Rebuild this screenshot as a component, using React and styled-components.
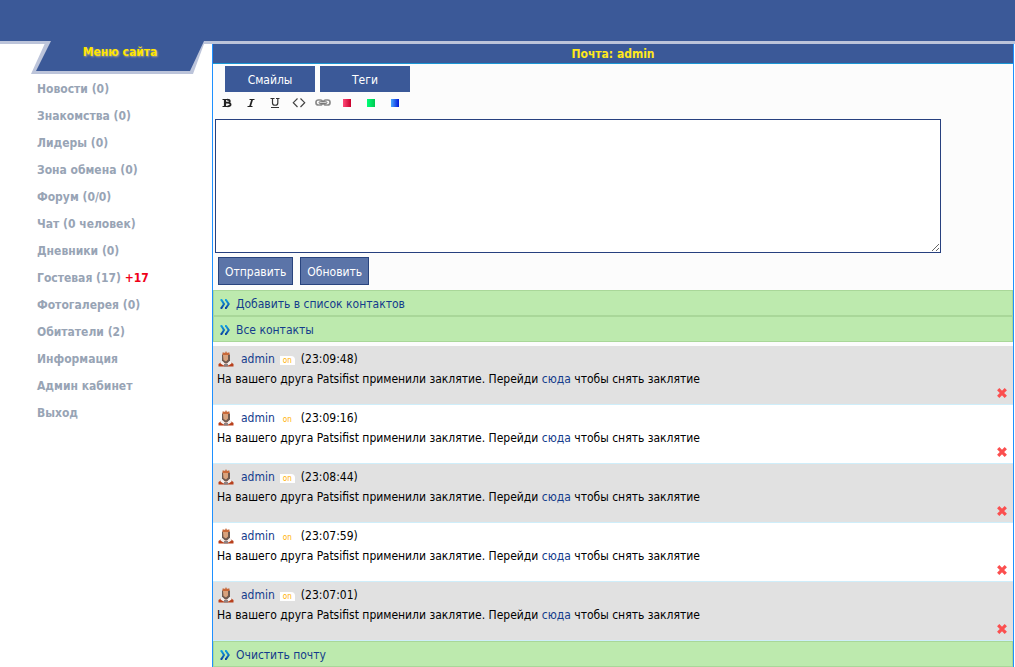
import React from 'react';
import styled, { createGlobalStyle } from 'styled-components';

const GlobalStyle = createGlobalStyle`
    body {
        margin: 0;
        background: #fff;
        color: #000;
        font-family: 'DejaVu Sans Condensed', 'DejaVu Sans', sans-serif;
        font-size: 12px;
    }
`;

const TopBar = styled.header`
    height: 41px;
    background: #3b5998;
    border-bottom: 3px solid #bcc4da;
`;

const Layout = styled.div`
    display: flex;
    align-items: flex-start;
`;

const Sidebar = styled.aside`
    flex: 0 0 212px;
`;

const MenuTitle = styled.h2`
    position: relative;
    width: 178px;
    height: 33px;
    margin: -3px 0 0 31px;
    font-size: 12px;
    line-height: 22px;
    text-align: center;
    color: #ffe600;
    text-shadow: 1px 1px 2px #b0a890;

    svg {
        position: absolute;
        top: 0;
        left: 0;
    }

    span {
        position: relative;
    }
`;

const MenuList = styled.ul`
    margin: 2px 0 0;
    padding: 0 0 0 37px;
    list-style: none;
`;

const MenuItem = styled.li`
    font-weight: bold;
    line-height: 27px;

    a {
        color: #98a4b5;
        text-decoration: none;
    }

    span {
        color: #f00018;
    }
`;

const Main = styled.main`
    flex: 1;
    min-width: 0;
    margin-right: 1px;
    border: solid #1e90ff;
    border-width: 0 1px;
    background: #fcfcfc;
`;

const Title = styled.h1`
    margin: 0;
    padding-top: 1px;
    border-bottom: 1px solid #1a96d4;
    background: #3b5998;
    color: #ffe81c;
    font-size: 12px;
    line-height: 18px;
    text-align: center;
`;

const Tabs = styled.div`
    display: flex;
    gap: 5px;
    padding: 2px 12px 0;
`;

const Tab = styled.button`
    width: 90px;
    height: 26px;
    padding: 2px 0 0;
    border: 0;
    background: #3b5998;
    color: #fff;
    font: inherit;
`;

const Toolbar = styled.div`
    display: flex;
    gap: 8px;
    padding: 3px 6px 8px;
`;

const Tool = styled.button`
    width: 16px;
    height: 16px;
    padding: 0;
    border: 0;
    background: none;

    svg {
        display: block;
    }
`;

const MessageBox = styled.textarea`
    display: block;
    width: 90%;
    height: 128px;
    margin: 0 2px;
    padding: 2px;
    border: 1px solid #27407f;
    background: #fff;
    font: inherit;
`;

const Actions = styled.div`
    display: flex;
    gap: 7px;
    padding: 4px 5px 5px;
`;

const ActionButton = styled.button`
    height: 28px;
    padding: 2px 6px 0;
    border: 1px solid #29447e;
    background: #5b74a8;
    color: #fff;
    font: inherit;
`;

const LinkRow = styled.a`
    display: flex;
    align-items: center;
    gap: 6px;
    height: 22px;
    padding: 2px 6px 0;
    border: 1px solid #a9d799;
    background: #bdeaae;
    color: #143c8c;
    text-decoration: none;
`;

const Messages = styled.div`
    padding-top: 4px;
`;

const MessageRow = styled.article`
    display: grid;
    grid-template-columns: 1fr auto;
    grid-template-rows: 26px 14px 18px;
    padding: 0 6px 0 4px;
    border-bottom: 1px solid #cfeefa;
    background: ${props => (props.$shaded ? '#e1e1e1' : '#fff')};

    p {
        grid-row: 2;
        margin: 0;
        line-height: 14px;
    }
`;

const MessageHead = styled.div`
    display: flex;
    align-items: center;
    padding-left: 1px;
    line-height: 26px;

    time {
        margin-left: 6px;
    }
`;

const TextLink = styled.a`
    color: #143c8c;
    text-decoration: none;
`;

const UserLink = styled(TextLink)`
    margin: 0 5px 0 7px;
`;

const Online = styled.span`
    width: 15px;
    height: 9px;
    margin-top: 3px;
    border-top-right-radius: 4px;
    background: #fff;
    color: #ffb000;
    font-size: 8px;
    line-height: 9px;
    text-align: center;
`;

const DeleteButton = styled.button`
    grid-row: 3;
    grid-column: 2;
    width: 10px;
    height: 14px;
    padding: 0;
    border: 0;
    background: none;

    svg {
        display: block;
    }
`;

const menu = [
    { name: 'Новости (0)' },
    { name: 'Знакомства (0)' },
    { name: 'Лидеры (0)' },
    { name: 'Зона обмена (0)' },
    { name: 'Форум (0/0)' },
    { name: 'Чат (0 человек)' },
    { name: 'Дневники (0)' },
    { name: 'Гостевая (17)', fresh: '+17' },
    { name: 'Фотогалерея (0)' },
    { name: 'Обитатели (2)' },
    { name: 'Информация' },
    { name: 'Админ кабинет' },
    { name: 'Выход' },
];

const times = ['23:09:48', '23:09:16', '23:08:44', '23:07:59', '23:07:01'];

const swatches = [
    { name: 'red', from: '#ff4a78', to: '#c8002c' },
    { name: 'green', from: '#00ff78', to: '#00c850' },
    { name: 'blue', from: '#4aa8ff', to: '#0018d8' },
];

const Chevrons = () => (
    <svg width="10" height="10" viewBox="0 0 10 10" fill="none" stroke="url(#chevron)" strokeWidth="2">
        <defs>
            <linearGradient id="chevron" x1="0" y1="0" x2="0" y2="10" gradientUnits="userSpaceOnUse">
                <stop offset="0" stopColor="#12a8e8" />
                <stop offset="1" stopColor="#0b3c9c" />
            </linearGradient>
        </defs>
        <path d="M0.5 1H1.5L4 5L1.5 9H0.5M5 1H6L8.700 5L6 9H5" />
    </svg>
);

const King = () => (
    <svg width="16" height="16" viewBox="0 0 16 16">
        <path d="M0.500 15.500V13L3.500 11H12.500L15.500 13V15.500Z" fill="#b8401c" />
        <path d="M4 3.500H12V10.500L10 12.500H6L4 10.500Z" fill="#6e5a50" />
        <path d="M5 4H10V8.500L8 10.500L5.500 9Z" fill="#d9a27c" />
        <path d="M4.500 1.500L6 1.500L7 2L8 0L9 2L10 1.500L11.500 1.500V4H4.500Z" fill="#c86838" />
        <path d="M3 10.500L4.500 10L7 12.500H9L11.500 10L13 10.500L13.500 12.500L10.500 14.500L9.500 13.500H6.500L5.500 14.500L2.500 12.500Z" fill="#f4f0ee" />
        <path d="M6 13H10V15.500H6Z" fill="#8c8080" />
    </svg>
);

const Bold = () => (
    <svg width="16" height="16" viewBox="0 0 16 16" fill="none" stroke="#222">
        <path d="M3.500 4.500H9M3.500 11.500H9.500" />
        <path d="M6 4V12" strokeWidth="2.200" />
        <path d="M8 4.700C11.700 4.700 11.700 7.700 8 7.700H6.500M8 7.700C12.700 7.700 12.700 11.300 8.500 11.300" strokeWidth="1.800" />
    </svg>
);

const Italic = () => (
    <svg width="16" height="16" viewBox="0 0 16 16" fill="none" stroke="#222">
        <path d="M6.500 4.500H11.500M4.500 11.500H9.500" />
        <path d="M9.200 4.500L7 11.500" strokeWidth="1.700" />
    </svg>
);

const Underline = () => (
    <svg width="16" height="16" viewBox="0 0 16 16" fill="none" stroke="#333">
        <path d="M3.500 3.500H7.500M9 3.500H12.500M4 12.500H12" />
        <path d="M5.500 3.500V8C5.500 11 10.800 11 10.800 8V3.500" strokeWidth="1.200" />
    </svg>
);

const Code = () => (
    <svg width="16" height="16" viewBox="0 0 16 16" fill="none" stroke="#444" strokeWidth="1.200">
        <path d="M6.500 3.500L2.300 7.700L6.500 12M9.500 3.500L13.700 7.700L9.500 12" />
    </svg>
);

const Chain = () => (
    <svg width="16" height="16" viewBox="0 0 16 16" fill="none">
        <rect x="1" y="5" width="6.500" height="5" rx="2.300" stroke="#8a8a8a" strokeWidth="1.700" />
        <rect x="8.500" y="5" width="6.500" height="5" rx="2.300" stroke="#8a8a8a" strokeWidth="1.700" />
        <rect x="4" y="6.700" width="8" height="1.800" rx="0.900" fill="#ddd" stroke="#666" strokeWidth="0.800" />
    </svg>
);

const Swatch = ({ name, from, to }) => (
    <svg width="16" height="16" viewBox="0 0 16 16">
        <defs>
            <linearGradient id={`swatch-${name}`}>
                <stop offset="0" stopColor={from} />
                <stop offset="1" stopColor={to} />
            </linearGradient>
        </defs>
        <rect x="4" y="4" width="8" height="8" fill={`url(#swatch-${name})`} />
    </svg>
);

const Cross = () => (
    <svg width="10" height="10" viewBox="0 0 10 10" stroke="#fb4f4f" strokeWidth="3.200">
        <path d="M1.200 1.200L8.800 8.800M8.800 1.200L1.200 8.800" />
    </svg>
);

export default function App() {
    return (
        <>
            <GlobalStyle />
            <TopBar />
            <Layout>
                <Sidebar>
                    <MenuTitle>
                        <svg width="178" height="33" viewBox="0 0 178 33">
                            <path d="M15 0H178L173 3L162 33H0Z" fill="#bcc4da" />
                            <path d="M20 0H173L159 30H5Z" fill="#3b5998" />
                        </svg>
                        <span>Меню сайта</span>
                    </MenuTitle>
                    <MenuList>
                        {menu.map(item => (
                            <MenuItem key={item.name}>
                                <a href="#">{item.name}</a>
                                {item.fresh && <span> {item.fresh}</span>}
                            </MenuItem>
                        ))}
                    </MenuList>
                </Sidebar>
                <Main>
                    <Title>Почта: admin</Title>
                    <Tabs>
                        <Tab type="button">Смайлы</Tab>
                        <Tab type="button">Теги</Tab>
                    </Tabs>
                    <Toolbar>
                        <Tool type="button" aria-label="Жирный"><Bold /></Tool>
                        <Tool type="button" aria-label="Курсив"><Italic /></Tool>
                        <Tool type="button" aria-label="Подчёркнутый"><Underline /></Tool>
                        <Tool type="button" aria-label="Код"><Code /></Tool>
                        <Tool type="button" aria-label="Ссылка"><Chain /></Tool>
                        {swatches.map(swatch => (
                            <Tool type="button" key={swatch.name} aria-label={swatch.name}>
                                <Swatch {...swatch} />
                            </Tool>
                        ))}
                    </Toolbar>
                    <MessageBox aria-label="Сообщение" />
                    <Actions>
                        <ActionButton type="button">Отправить</ActionButton>
                        <ActionButton type="button">Обновить</ActionButton>
                    </Actions>
                    <LinkRow href="#"><Chevrons />Добавить в список контактов</LinkRow>
                    <LinkRow href="#"><Chevrons />Все контакты</LinkRow>
                    <Messages>
                        {times.map((time, index) => (
                            <MessageRow key={time} $shaded={index % 2 === 0}>
                                <MessageHead>
                                    <King />
                                    <UserLink href="#">admin</UserLink>
                                    <Online>on</Online>
                                    <time>({time})</time>
                                </MessageHead>
                                <p>
                                    На вашего друга Patsifist применили заклятие. Перейди <TextLink href="#">сюда</TextLink> чтобы снять заклятие
                                </p>
                                <DeleteButton type="button" aria-label="Удалить"><Cross /></DeleteButton>
                            </MessageRow>
                        ))}
                    </Messages>
                    <LinkRow href="#"><Chevrons />Очистить почту</LinkRow>
                </Main>
            </Layout>
        </>
    );
}
